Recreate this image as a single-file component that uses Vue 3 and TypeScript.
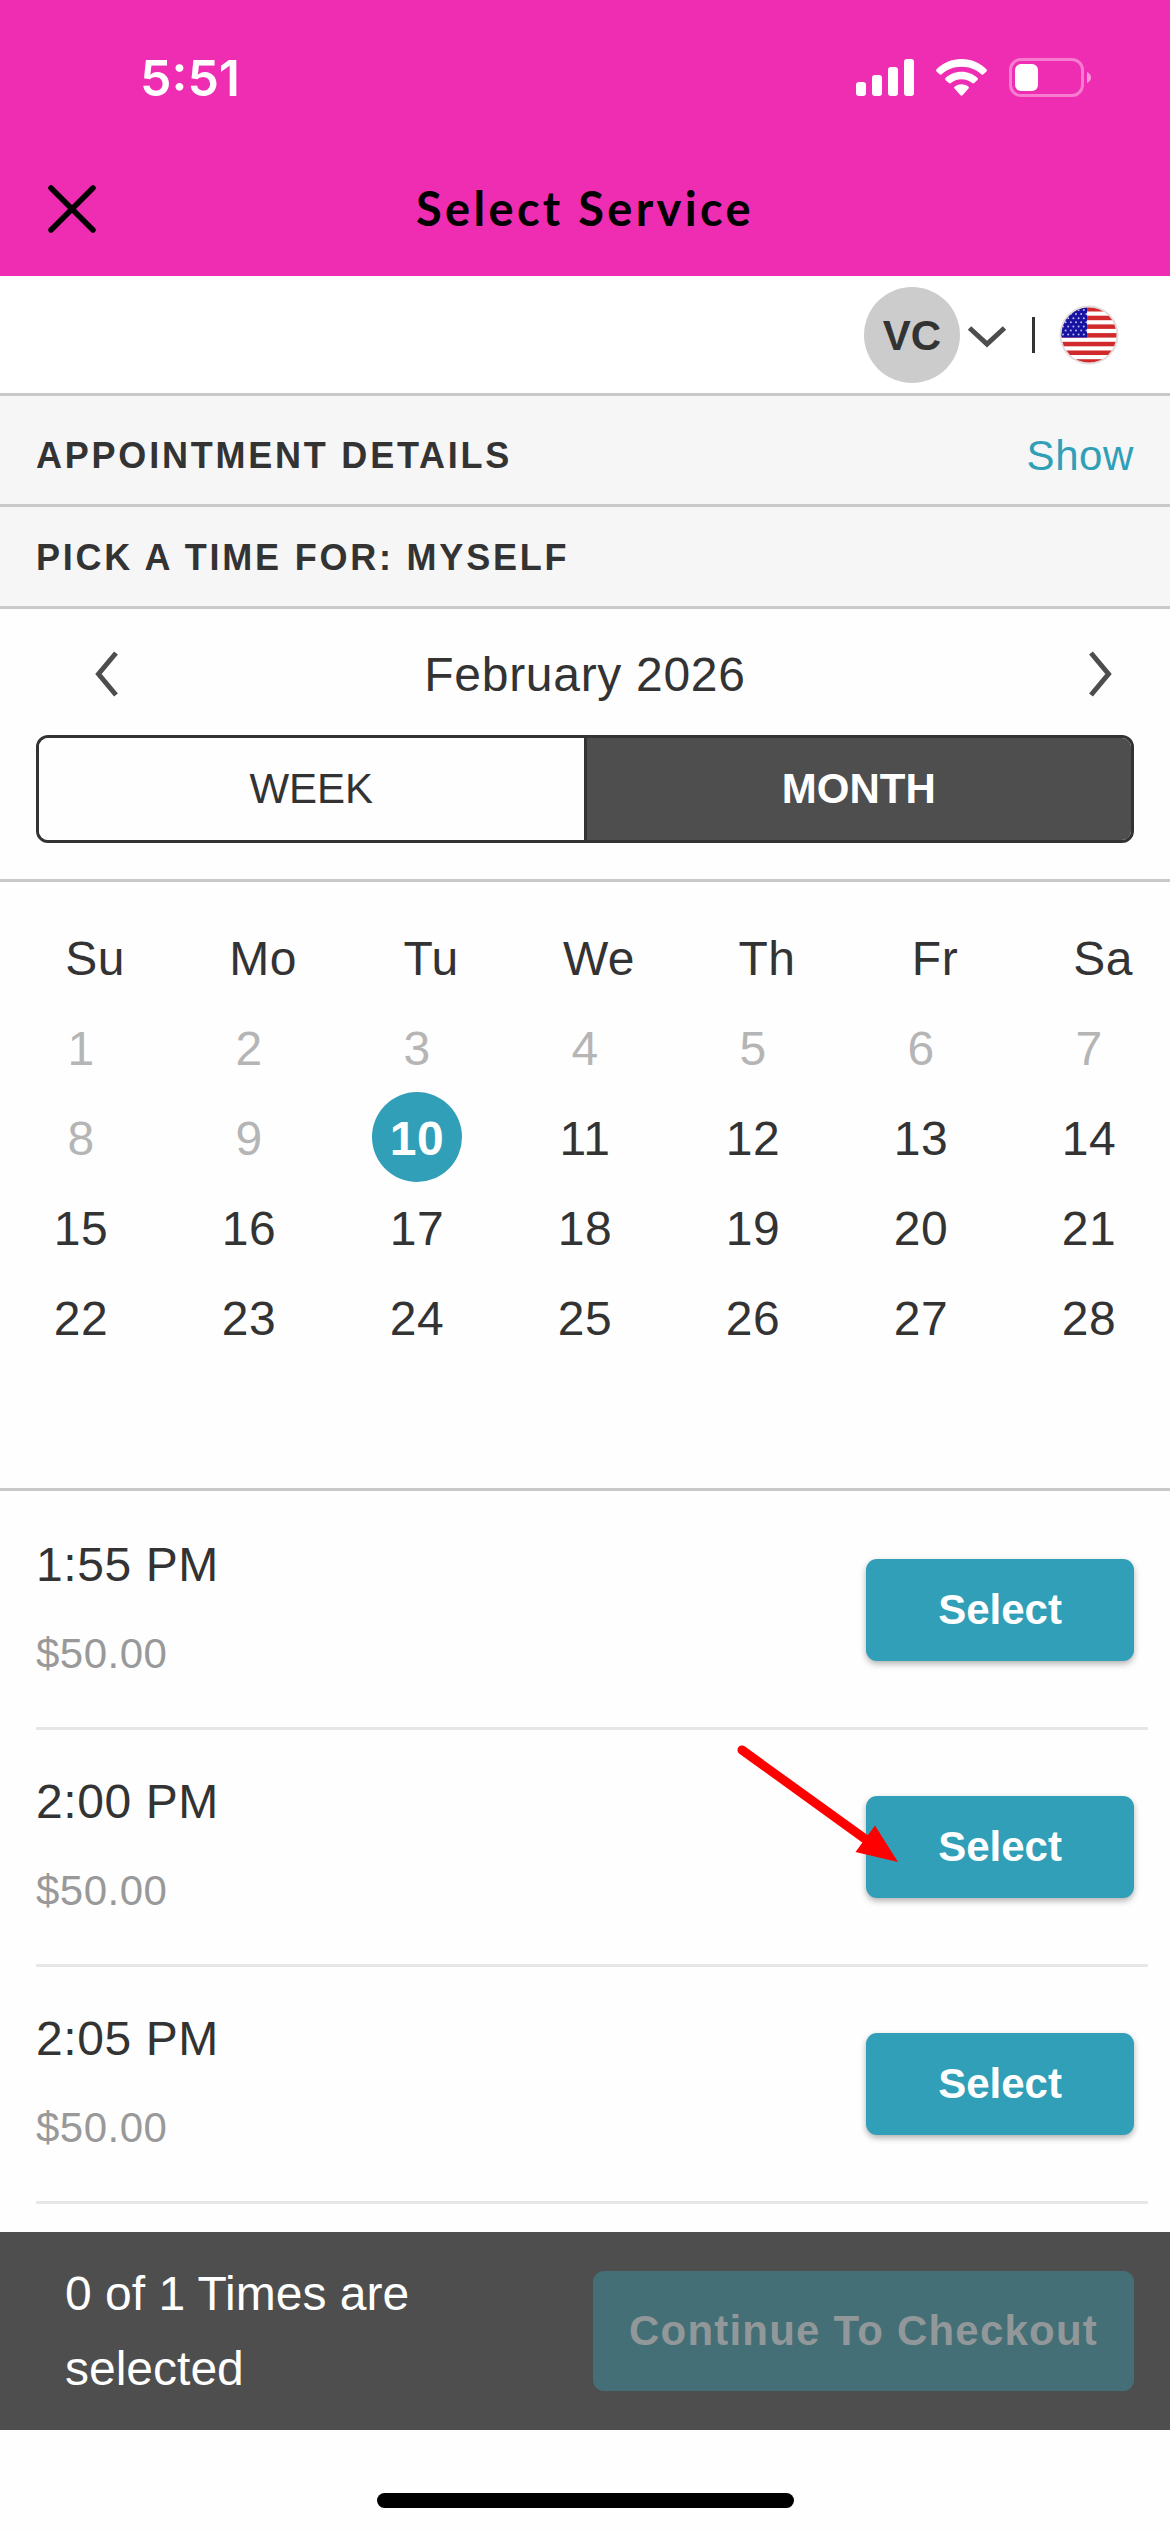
<script setup lang="ts">
import { ref } from 'vue'

interface Slot {
  time: string
  price: string
}

const weekdays: string[] = ['Su', 'Mo', 'Tu', 'We', 'Th', 'Fr', 'Sa']
const today = 10
const selectedDay = ref<number>(10)
const weeks: number[][] = [0, 1, 2, 3].map((w) =>
  Array.from({ length: 7 }, (_, d) => w * 7 + d + 1),
)

const slots: Slot[] = [
  { time: '1:55 PM', price: '$50.00' },
  { time: '2:00 PM', price: '$50.00' },
  { time: '2:05 PM', price: '$50.00' },
]

const stripes: number[] = [0, 1, 2, 3, 4, 5, 6]
const stars: { x: number; y: number }[] = []
for (let r = 0; r < 7; r++) {
  for (let c = 0; c < 5; c++) {
    stars.push({ x: 4 + c * 5.2 + (r % 2) * 2.6, y: 5 + r * 4.1 })
  }
}
</script>

<template>
  <div class="screen">
    <header class="top">
      <div class="status">
        <span class="clock">5:51</span>
        <svg class="status-icons" width="236" height="40" viewBox="856 58 236 40">
          <g fill="#fff">
            <rect x="856" y="82" width="10" height="14" rx="3" />
            <rect x="872" y="75" width="10" height="21" rx="3" />
            <rect x="888" y="67" width="10" height="29" rx="3" />
            <rect x="904" y="59" width="10" height="37" rx="3" />
            <path d="M961.500 59C971.500 59 980 62.800 986.500 69.200Q987.500 70.300 986.500 71.400L983.400 74.300Q982.400 75.200 981.300 74.200C976 69.400 969.300 66.700 961.500 66.700C953.700 66.700 947 69.400 941.700 74.200Q940.600 75.200 939.600 74.300L936.500 71.400Q935.500 70.300 936.500 69.200C943 62.800 951.500 59 961.500 59Z" />
            <path d="M961.500 71.800C968 71.800 973.300 74.200 977.500 78Q978.500 79 977.500 80L974.200 83.100Q973.200 84 972.100 83.100C969.200 80.700 965.800 79.300 961.500 79.300C957.200 79.300 953.800 80.700 950.900 83.100Q949.800 84 948.800 83.100L945.500 80Q944.500 79 945.500 78C949.700 74.200 955 71.800 961.500 71.800Z" />
            <path d="M961.500 84.300C964.500 84.300 966.700 85.200 968.500 86.700Q969.500 87.600 968.500 88.600L962.500 95.300Q961.500 96.200 960.500 95.300L954.500 88.600Q953.500 87.600 954.500 86.700C956.300 85.200 958.500 84.300 961.500 84.300Z" />
            <rect x="1015" y="64" width="23" height="27" rx="6" />
          </g>
          <rect x="1010.500" y="59.500" width="72" height="36" rx="10.500" fill="none" stroke="#fff" stroke-opacity=".38" stroke-width="3" />
          <path d="M1087 72Q1091 74 1091 77.500Q1091 81 1087 83Z" fill="#fff" fill-opacity=".5" />
        </svg>
      </div>
      <div class="title-bar">
        <svg class="close" width="50" height="50" viewBox="0 0 50 50">
          <path d="M4 4L46 46M46 4L4 46" stroke="#000" stroke-width="5.500" stroke-linecap="round" />
        </svg>
        <h1>Select Service</h1>
      </div>
    </header>

    <div class="account">
      <div class="avatar">VC</div>
      <svg class="caret" width="40" height="24" viewBox="0 0 40 24">
        <path d="M2.500 3L20 19L37.500 3" fill="none" stroke="#4d4d4d" stroke-width="5" />
      </svg>
      <span class="bar"></span>
      <svg class="flag" width="60" height="60" viewBox="0 0 60 60">
        <defs>
          <clipPath id="flag-round"><circle cx="30" cy="30" r="27.500" /></clipPath>
        </defs>
        <circle cx="30" cy="30" r="29.500" fill="#e3dcdc" />
        <g clip-path="url(#flag-round)">
          <rect width="60" height="60" fill="#fff" />
          <rect v-for="s in stripes" :key="s" x="0" :y="2 + s * 8.700" width="60" height="4.500" fill="#d12a2c" />
          <rect width="28" height="32.500" fill="#1712a0" />
          <circle v-for="(p, i) in stars" :key="i" :cx="p.x" :cy="p.y" r="1" fill="#b9bcf5" />
        </g>
      </svg>
    </div>

    <section class="band details">
      <h2>APPOINTMENT DETAILS</h2>
      <a class="show">Show</a>
    </section>
    <section class="band pick">
      <h2>PICK A TIME FOR: MYSELF</h2>
    </section>

    <section class="picker">
      <div class="month-nav">
        <svg class="prev" width="26" height="46" viewBox="0 0 26 46">
          <path d="M22 2L4.500 23L22 44" fill="none" stroke="#4d4d4d" stroke-width="5" />
        </svg>
        <span class="month">February 2026</span>
        <svg class="next" width="26" height="46" viewBox="0 0 26 46">
          <path d="M4 2L21.500 23L4 44" fill="none" stroke="#4d4d4d" stroke-width="5" />
        </svg>
      </div>
      <div class="toggle">
        <button class="week">WEEK</button>
        <button class="active">MONTH</button>
      </div>
    </section>

    <section class="calendar">
      <div class="row heads">
        <span v-for="d in weekdays" :key="d" class="cell head">{{ d }}</span>
      </div>
      <div v-for="(week, i) in weeks" :key="i" class="row">
        <span
          v-for="day in week"
          :key="day"
          class="cell"
          :class="{ past: day < today, selected: day === selectedDay }"
        >{{ day }}</span>
      </div>
    </section>

    <section class="slots">
      <article v-for="slot in slots" :key="slot.time" class="slot">
        <div class="info">
          <span class="time">{{ slot.time }}</span>
          <span class="price">{{ slot.price }}</span>
        </div>
        <button class="select">Select</button>
      </article>
    </section>

    <footer class="checkout">
      <p>0 of 1 Times are selected</p>
      <button>Continue To Checkout</button>
    </footer>
    <div class="home"><span></span></div>

    <svg class="pointer" width="170" height="130" viewBox="735 1740 170 130">
      <path d="M742 1750L868 1841" stroke="#f00" stroke-width="9" stroke-linecap="round" />
      <path d="M898 1862L855.500 1852L875 1825.500Z" fill="#f00" />
    </svg>
  </div>
</template>

<style>
body {
  margin: 0;
}
</style>

<style scoped>
.screen {
  position: relative;
  display: flex;
  flex-direction: column;
  width: 1170px;
  height: 2532px;
  overflow: hidden;
  background: #fefefe;
  color: #333;
  font-family: "Liberation Sans", Arial, sans-serif;
  font-size: 48px;
}

h1,
h2,
p {
  margin: 0;
}

button {
  margin: 0;
  padding: 0;
  border: 0;
  font-family: inherit;
  font-size: 42px;
  color: inherit;
}

.top {
  height: 276px;
  background: #ef2db2;
}

.status {
  display: flex;
  align-items: center;
  justify-content: space-between;
  height: 156px;
  padding: 0 78px 0 140px;
  box-sizing: border-box;
}

.clock {
  font-family: Inter, sans-serif;
  font-size: 50px;
  font-weight: 600;
  color: #fff;
}

.title-bar {
  display: grid;
  grid-template-columns: 1fr auto 1fr;
  align-items: center;
  height: 106px;
  padding: 0 47px;
}

h1 {
  padding-bottom: 2px;
  font-family: Lato, sans-serif;
  font-size: 47px;
  font-weight: 700;
  letter-spacing: 3.300px;
  color: #000;
}

.account {
  display: flex;
  align-items: center;
  justify-content: flex-end;
  height: 117px;
  padding: 0 51px 0 0;
  background: #fff;
}

.avatar {
  width: 96px;
  height: 96px;
  border-radius: 50%;
  background: #ccc;
  font-size: 42px;
  font-weight: 700;
  line-height: 97px;
  text-align: center;
}

.caret {
  margin: 4px 0 0 7px;
}

.bar {
  width: 3px;
  height: 36px;
  margin: 0 24px 0 25px;
  background: #333;
}

.band {
  display: flex;
  align-items: center;
  justify-content: space-between;
  box-sizing: border-box;
  padding: 0 36px;
  border-top: 3px solid #c9c9c9;
  background: #f6f6f6;
}

.details {
  height: 111px;
  padding-top: 12px;
}

.pick {
  height: 102px;
  padding-top: 3px;
}

h2 {
  font-size: 36px;
  font-weight: 700;
  letter-spacing: 2.780px;
}

.show {
  font-size: 42px;
  letter-spacing: .6px;
  color: #319fb7;
}

.picker {
  box-sizing: border-box;
  height: 273px;
  padding: 0 36px;
  border-top: 3px solid #c9c9c9;
}

.month-nav {
  display: grid;
  grid-template-columns: 1fr auto 1fr;
  align-items: center;
  box-sizing: border-box;
  height: 126px;
  padding: 4px 21px 0;
}

.prev {
  margin-left: 37px;
}

.next {
  justify-self: end;
}

.month {
  letter-spacing: .7px;
}

.toggle {
  display: flex;
  box-sizing: border-box;
  height: 108px;
  border: 3px solid #333;
  border-radius: 12px;
  overflow: hidden;
}

.toggle button {
  flex: 1;
  background: #fefefe;
}

.toggle .active {
  border-left: 3px solid #333;
  background: #4e4e4e;
  color: #fff;
  font-weight: 700;
}

.calendar {
  box-sizing: border-box;
  height: 609px;
  padding: 32px 36px 0;
  border-top: 3px solid #c9c9c9;
}

.row {
  display: flex;
  justify-content: space-between;
}

.row.heads {
  height: 88px;
}

.cell {
  width: 90px;
  border-radius: 50%;
  line-height: 90px;
  text-align: center;
  letter-spacing: .5px;
}

.head {
  position: relative;
  left: 14px;
}

.row:nth-child(n + 2) .cell {
  height: 90px;
  line-height: 94px;
}

.past {
  color: #b5b5b5;
}

.selected {
  background: #319fb7;
  color: #fff;
  font-weight: 700;
}

.slots {
  box-sizing: border-box;
  height: 744px;
  padding: 2px 22px 0 36px;
  border-top: 3px solid #c9c9c9;
}

.slot {
  display: flex;
  align-items: flex-start;
  justify-content: space-between;
  box-sizing: border-box;
  height: 237px;
  padding: 27px 14px 0 0;
  border-bottom: 3px solid #e6e6e6;
}

.info {
  display: flex;
  flex-direction: column;
  line-height: 90px;
}

.time {
  letter-spacing: .6px;
}

.price {
  font-size: 42px;
  line-height: 88px;
  letter-spacing: .5px;
  color: #999;
}

.select {
  width: 268px;
  height: 102px;
  margin-top: 39px;
  border-radius: 11px;
  background: #319fb7;
  box-shadow: 0 3px 6px rgba(0, 0, 0, .3);
  color: #fff;
  font-weight: 700;
}

.checkout {
  display: flex;
  align-items: center;
  justify-content: space-between;
  box-sizing: border-box;
  height: 198px;
  padding: 0 36px 0 65px;
  background: #4e4e4e;
}

.checkout p {
  width: 400px;
  line-height: 75px;
  color: #fff;
}

.checkout button {
  width: 541px;
  height: 120px;
  border-radius: 11px;
  background: #456f76;
  color: #929899;
  font-weight: 700;
  letter-spacing: 1.200px;
}

.home {
  display: flex;
  justify-content: center;
  padding-top: 63px;
}

.home span {
  width: 417px;
  height: 15px;
  border-radius: 8px;
  background: #000;
}

.pointer {
  position: absolute;
  left: 735px;
  top: 1740px;
}
</style>
